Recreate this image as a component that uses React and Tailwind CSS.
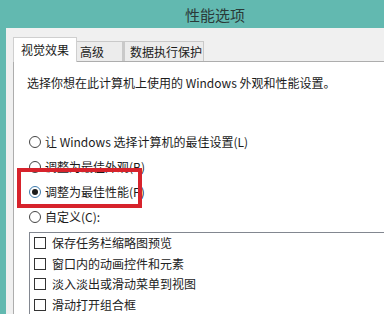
import React from 'react';

// 性能选项 dialog – "视觉效果" tab
const radios = [
  { label: '让 Windows 选择计算机的最佳设置(L)', checked: false },
  { label: '调整为最佳外观(B)', checked: false },
  { label: '调整为最佳性能(P)', checked: true },
  { label: '自定义(C):', checked: false },
];

const options = ['保存任务栏缩略图预览', '窗口内的动画控件和元素', '淡入淡出或滑动菜单到视图', '滑动打开组合框'];

const Radio = ({ checked }) => (
  <span
    className={`w-[12px] h-[12px] rounded-full border bg-white flex items-center justify-center shrink-0 ${
      checked ? 'border-[#3d7bad]' : 'border-[#444]'
    }`}
  >
    {checked && <span className="w-[6px] h-[6px] rounded-full bg-[#1b1b1b]" />}
  </span>
);

export default function App() {
  return (
    <div
      className="w-[384px] h-[314px] bg-[#62b9b0] overflow-hidden relative text-[#1b1b1b]"
      style={{ fontFamily: '"Noto Sans CJK SC", "Noto Sans", sans-serif' }}
    >
      <div className="h-[28px] flex items-center pl-[185px] text-[15px] text-[#2a3a38] leading-none">性能选项</div>

      <div className="ml-[6px] h-[286px] bg-[#f0f0f0] pl-[7px] pt-[9px] flex flex-col">
        {/* tabs */}
        <div className="flex items-end h-[24px]">
          <div className="relative z-10 -mb-px w-[64px] h-[25px] bg-white border border-b-0 border-[#cfcfcf] text-[12px] flex items-center pl-[7px] pb-[1px]">
            视觉效果
          </div>
          <div className="w-[46px] h-[20px] bg-[#ececec] border border-b-0 border-l-0 border-[#c9c9c9] text-[12px] flex items-center pl-[3px]">
            高级
          </div>
          <div className="w-[81px] h-[20px] bg-[#ececec] border border-b-0 border-l-2 border-[#c9c9c9] text-[12px] flex items-center pl-[5px]">
            数据执行保护
          </div>
        </div>

        {/* pane */}
        <div className="flex-1 bg-white border-t border-l border-[#adadad] pl-[13px] pt-[13px] text-[12px]">
          <div className="h-[16px] leading-[16px]">选择你想在此计算机上使用的 Windows 外观和性能设置。</div>

          <div className="mt-[38px] flex flex-col">
            {radios.map((r) => (
              <div key={r.label} className="h-[25px] flex items-center gap-[4px] ml-[2px]">
                <Radio checked={r.checked} />
                <span className="leading-none">{r.label}</span>
              </div>
            ))}
          </div>

          <div className="mt-[3px] ml-[2px] border-t border-l border-[#828790] h-[100px] pl-[4px]">
            {options.map((o) => (
              <div key={o} className="h-[20.5px] flex items-center gap-[6px]">
                <span className="w-[12px] h-[12px] border border-[#333] bg-white shrink-0" />
                <span className="leading-none text-[#222]">{o}</span>
              </div>
            ))}
          </div>
        </div>
      </div>

      {/* red highlight annotation */}
      <div className="absolute left-[17px] top-[168px] w-[125px] h-[40px] border-4 border-[#d7232c]" />
    </div>
  );
}
